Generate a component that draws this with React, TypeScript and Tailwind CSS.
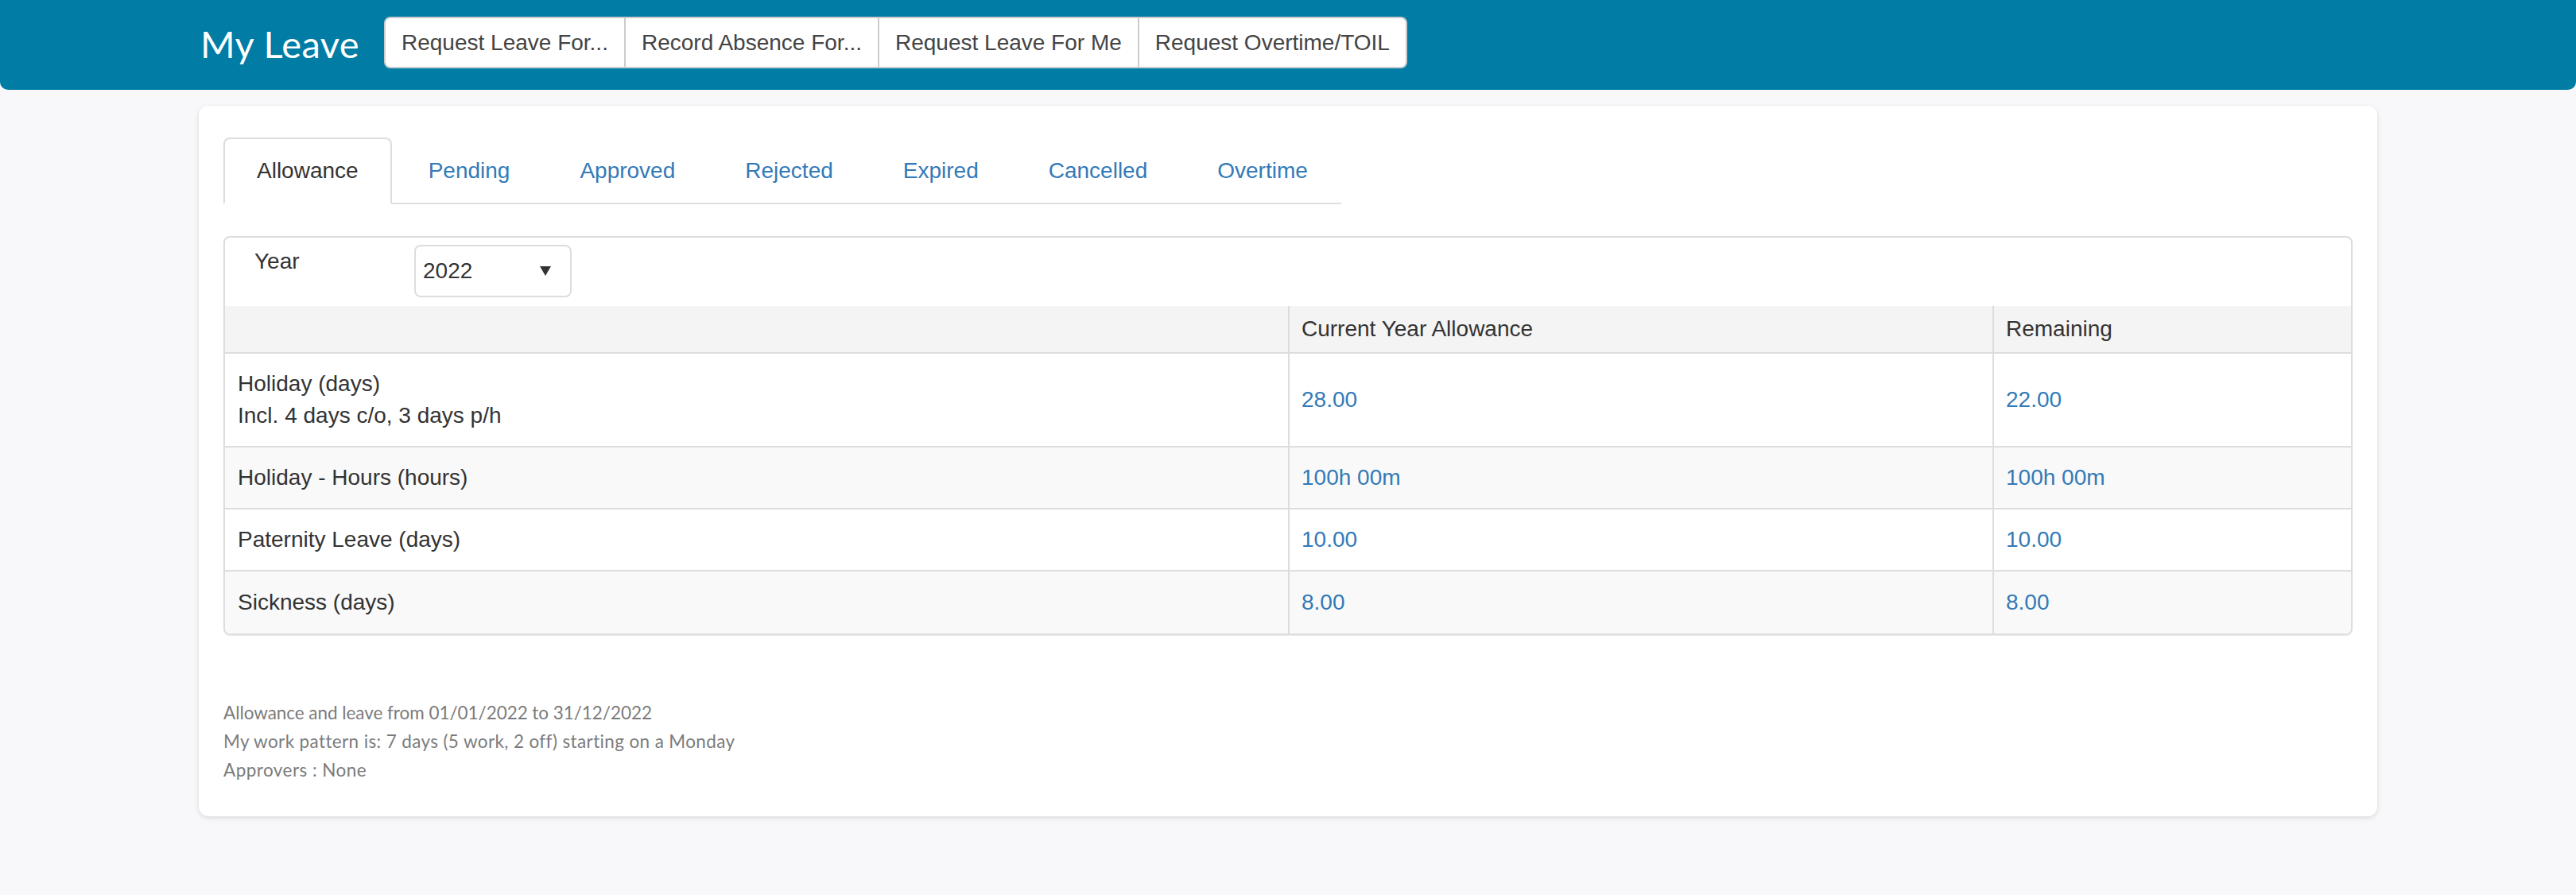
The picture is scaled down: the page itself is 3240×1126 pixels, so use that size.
import React from "react";

const actions = ["Request Leave For...", "Record Absence For...", "Request Leave For Me", "Request Overtime/TOIL"];

const tabs = ["Allowance", "Pending", "Approved", "Rejected", "Expired", "Cancelled", "Overtime"];

const rows = [
  { name: "Holiday (days)", note: "Incl. 4 days c/o, 3 days p/h", allowance: "28.00", remaining: "22.00" },
  { name: "Holiday - Hours (hours)", allowance: "100h 00m", remaining: "100h 00m" },
  { name: "Paternity Leave (days)", allowance: "10.00", remaining: "10.00" },
  { name: "Sickness (days)", allowance: "8.00", remaining: "8.00" },
];

function Caret() {
  return (
    <svg width="14" height="12" viewBox="0 0 14 12" className="fill-[#333]">
      <polygon points="0,0 14,0 7,12" />
    </svg>
  );
}

export default function App() {
  return (
    <div className="min-h-screen bg-[#f8f8fa] font-['Liberation_Sans',Arial,sans-serif] text-[28px] leading-[40px] text-[#333]">
      <header className="h-[113px] rounded-b-[10px] bg-[#007ca5]">
        <div className="mx-auto flex w-[2740px] items-center pl-[2px] pt-[21px]">
          <h1 className="mt-[3px] w-[231px] font-['Lato','Open_Sans',sans-serif] text-[47px] leading-[47px] font-normal tracking-[0.4px] text-white">
            My Leave
          </h1>
          <div className="flex h-[65px] divide-x-2 divide-[#ccc] overflow-hidden rounded-[8px] border-2 border-[#ccc] bg-white text-[#444]">
            {actions.map((a) => (
              <button key={a} className="flex items-center px-[20px] text-[28px] whitespace-nowrap">
                {a}
              </button>
            ))}
          </div>
        </div>
      </header>

      <main className="mx-auto mt-[20px] w-[2740px] rounded-[12px] bg-white px-[31px] pt-[40px] pb-[40px] shadow-[0_2px_6px_rgba(0,0,0,0.13)]">
        <ul className="inline-flex border-b-2 border-[#ddd]">
          {tabs.map((t, i) => (
            <li key={t} className={i < tabs.length - 1 ? "-mb-[2px] mr-[4px]" : "-mb-[2px]"}>
              <a
                className={
                  i === 0
                    ? "block rounded-t-[8px] border-2 border-[#ddd] border-b-white bg-white px-[40px] py-[20px] text-[#333]"
                    : "block border-2 border-transparent px-[40px] py-[20px] text-[#337ab7]"
                }
              >
                {t}
              </a>
            </li>
          ))}
        </ul>

        <div className="mt-[40px] overflow-hidden rounded-[8px] border-2 border-[#ddd] shadow-[0_1px_1px_rgba(0,0,0,0.08)]">
          <div className="flex h-[86px] items-start pt-[9px] pl-[37px]">
            <span className="mt-[1px] w-[201px]">Year</span>
            <div className="flex h-[66px] w-[198px] items-center justify-between rounded-[8px] border-2 border-[#ddd] bg-white pr-[24px] pl-[9px]">
              <span>2022</span>
              <Caret />
            </div>
          </div>

          <div className="grid h-[60px] grid-cols-[1337px_886px_1fr] border-b-2 border-[#ddd] bg-[#f4f4f4]">
            <div />
            <div className="flex items-center border-l-2 border-[#ddd] px-[15px]">Current Year Allowance</div>
            <div className="flex items-center border-l-2 border-[#ddd] px-[15px]">Remaining</div>
          </div>

          {rows.map((r, i) => (
            <div
              key={r.name}
              className={
                "grid grid-cols-[1337px_886px_1fr] " +
                (i === 0 ? "h-[118px] " : "h-[78px] ") +
                (i % 2 === 1 ? "bg-[#f9f9f9] " : "bg-white ") +
                (i < rows.length - 1 ? "border-b-2 border-[#ddd]" : "")
              }
            >
              <div className="flex flex-col justify-center px-[16px]">
                <span>{r.name}</span>
                {r.note && <span>{r.note}</span>}
              </div>
              <div className="flex items-center border-l-2 border-[#ddd] px-[15px] text-[#337ab7]">{r.allowance}</div>
              <div className="flex items-center border-l-2 border-[#ddd] px-[15px] text-[#337ab7]">{r.remaining}</div>
            </div>
          ))}
        </div>

        <div className="mt-[80px] font-['Lato','Open_Sans',sans-serif] text-[22.5px] leading-[36px] text-[#7b7b7b]">
          <p className="tracking-[-0.05px]">Allowance and leave from 01/01/2022 to 31/12/2022</p>
          <p className="tracking-[0.37px]">My work pattern is: 7 days (5 work, 2 off) starting on a Monday</p>
          <p className="tracking-[0.45px]">Approvers : None</p>
        </div>
      </main>
    </div>
  );
}
